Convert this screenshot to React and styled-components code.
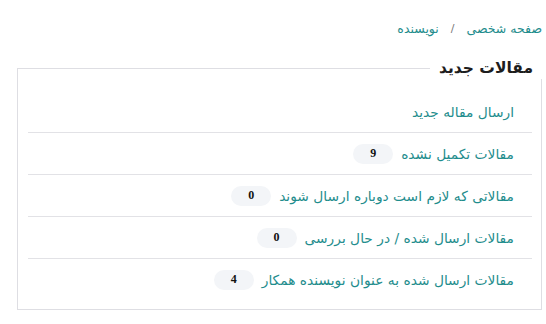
import React from "react";
import styled, { createGlobalStyle } from "styled-components";

const Global = createGlobalStyle`
  html, body { margin: 0; padding: 0; background: #fff; }
  body { font-family: "DejaVu Sans", "Noto Sans", sans-serif; }
`;

const Page = styled.div`
  direction: rtl;
  width: 546px;
  box-sizing: border-box;
  padding: 19px 4px 0 17px;
`;

const Breadcrumb = styled.nav`
  display: flex;
  align-items: center;
  gap: 12px;
  padding-right: 0;
  height: 18px;
  font-size: 12.5px;
  color: #1f8d8d;
  margin-bottom: 20px;
`;

const Sep = styled.span`
  color: #777;
  font-size: 11px;
`;

const Box = styled.fieldset`
  margin: 0;
  padding: 12px 9px 9px 10px;
  border: 1px solid #dedee3;
  min-inline-size: 0;
`;

const Legend = styled.legend`
  padding: 0 9px;
  margin-right: -10px;
  font-size: 15.5px;
  font-weight: bold;
  color: #1d1d1d;
  line-height: 22px;
`;

const Row = styled.div`
  display: flex;
  align-items: center;
  gap: 8px;
  height: 41px;
  padding-right: 18px;
  border-bottom: ${(p) => (p.$last ? "none" : "1px solid #e2e2e6")};
  font-size: 13.8px;
  color: #1f8d8d;
`;

const Badge = styled.span`
  display: inline-flex;
  align-items: center;
  justify-content: center;
  width: 40px;
  height: 20px;
  border-radius: 10px;
  background: #f3f5f8;
  color: #111;
  font-family: "Liberation Serif", serif;
  font-weight: bold;
  font-size: 12px;
`;

const items = [
  { label: "ارسال مقاله جدید" },
  { label: "مقالات تکمیل نشده", count: 9 },
  { label: "مقالاتی که لازم است دوباره ارسال شوند", count: 0 },
  { label: "مقالات ارسال شده / در حال بررسی", count: 0 },
  { label: "مقالات ارسال شده به عنوان نویسنده همکار", count: 4 },
];

export default function App() {
  return (
    <>
      <Global />
      <Page>
        <Breadcrumb>
          <span>صفحه شخصی</span>
          <Sep>/</Sep>
          <span>نویسنده</span>
        </Breadcrumb>
        <Box>
          <Legend>مقالات جدید</Legend>
          {items.map((it, i) => (
            <Row key={i} $last={i === items.length - 1}>
              <span>{it.label}</span>
              {it.count !== undefined && <Badge>{it.count}</Badge>}
            </Row>
          ))}
        </Box>
      </Page>
    </>
  );
}
